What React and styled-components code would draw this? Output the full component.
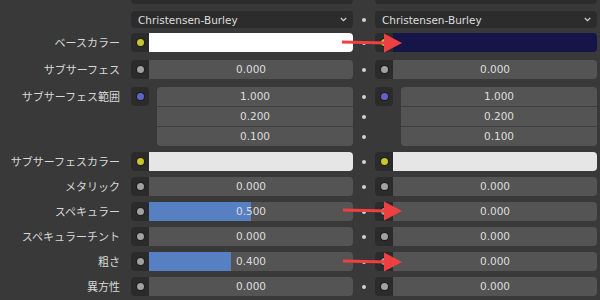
import styled, { createGlobalStyle } from 'styled-components';

const GlobalStyle = createGlobalStyle`
  html, body {
    margin: 0;
    background: #393939;
    overflow: hidden;
  }
`;

const Panel = styled.div`
  position: relative;
  width: 600px;
  height: 300px;
  overflow: hidden;
  display: flex;
  flex-direction: column;
  font-family: 'DejaVu Sans', sans-serif;
`;

const Row = styled.div`
  display: grid;
  grid-template-columns: 131px 222px 22px 222px;
  align-items: start;
  flex: none;
  margin-top: ${(p) => p.$mt}px;
`;

const Label = styled.div`
  height: 19px;
  line-height: 19px;
  padding-right: 11px;
  text-align: right;
  font-family: 'Noto Sans CJK JP', sans-serif;
  font-size: 11px;
  color: #d8d8d8;
  white-space: nowrap;
`;

const Input = styled.div`
  display: flex;
  align-items: flex-start;
  gap: ${(p) => (p.$vector ? 8 : 0)}px;
`;

const SocketBox = styled.div`
  width: 18px;
  height: 19px;
  flex: none;
  background: #2b2b2b;
  border-radius: ${(p) => (p.$vector ? '4px' : '4px 0 0 4px')};
  display: flex;
  align-items: center;
  justify-content: center;
`;

const SocketDot = styled.span`
  width: 7px;
  height: 7px;
  border-radius: 50%;
  background: ${(p) => p.$color};
  box-shadow: 0 0 0 1px rgba(0, 0, 0, 0.35);
`;

const NumField = styled.div`
  flex: 1;
  height: 19px;
  line-height: 19px;
  text-align: center;
  font-size: 10.5px;
  color: #dedede;
  border-radius: ${(p) => (p.$flat ? '0' : '0 4px 4px 0')};
  background: ${(p) =>
    p.$fill
      ? `linear-gradient(to right, #5680c2 ${p.$fill * 100}%, #545454 ${p.$fill * 100}%)`
      : '#545454'};
`;

const ColorField = styled.div`
  flex: 1;
  height: 19px;
  border-radius: 0 4px 4px 0;
  background: ${(p) => p.$color};
`;

const VectorStack = styled.div`
  flex: 1;
  display: flex;
  flex-direction: column;
  gap: 1px;
  background: #3e3e3e;
  border-radius: 4px;
  overflow: hidden;
`;

const Dropdown = styled.div`
  height: 17px;
  padding: 0 6px 0 7px;
  display: flex;
  align-items: center;
  justify-content: space-between;
  background: #2c2c2c;
  border-radius: 4px;
  font-size: 10.5px;
  color: #dedede;
`;

const DarkField = styled.div`
  height: 19px;
  background: #2c2c2c;
  border-radius: 4px;
`;

const Center = styled.div`
  display: flex;
  flex-direction: column;
  align-items: center;
  gap: 1px;
`;

const DotCell = styled.div`
  height: ${(p) => p.$h || 19}px;
  display: flex;
  align-items: center;
`;

const CenterDot = styled.span`
  width: 4px;
  height: 4px;
  border-radius: 50%;
  background: #d2d2d2;
`;

const Overlay = styled.svg`
  position: absolute;
  left: 0;
  top: 0;
  pointer-events: none;
`;

const SOCKET = { yellow: '#c7c729', gray: '#a1a1a1', blue: '#6363c7' };

function Chevron() {
  return (
    <svg width="7" height="5" viewBox="0 0 7 5">
      <polyline points="0.8,1 3.5,3.7 6.2,1" fill="none" stroke="#cfcfcf" strokeWidth="1.3" />
    </svg>
  );
}

function Dots({ n = 1, h }) {
  return (
    <Center>
      {Array.from({ length: n }).map((_, i) => (
        <DotCell key={i} $h={h}>
          <CenterDot />
        </DotCell>
      ))}
    </Center>
  );
}

function Value({ socket = 'gray', value, fill }) {
  return (
    <Input>
      <SocketBox>
        <SocketDot $color={SOCKET[socket]} />
      </SocketBox>
      <NumField $fill={fill}>{value}</NumField>
    </Input>
  );
}

function Color({ color }) {
  return (
    <Input>
      <SocketBox>
        <SocketDot $color={SOCKET.yellow} />
      </SocketBox>
      <ColorField $color={color} />
    </Input>
  );
}

function Vector({ values }) {
  return (
    <Input $vector>
      <SocketBox $vector>
        <SocketDot $color={SOCKET.blue} />
      </SocketBox>
      <VectorStack>
        {values.map((v) => (
          <NumField key={v} $flat>
            {v}
          </NumField>
        ))}
      </VectorStack>
    </Input>
  );
}

// red annotation arrow drawn over the panel
function Arrow({ x1, y1, y2 }) {
  return (
    <g fill="#ee4040" stroke="#ee4040">
      <line x1={x1} y1={y1} x2={388} y2={y2} strokeWidth="3" />
      <polygon points={`384,${y2 - 9.5} 402,${y2} 384,${y2 + 9.5}`} stroke="none" />
    </g>
  );
}

const scalars = [
  { label: 'メタリック', left: '0.000', right: '0.000' },
  { label: 'スペキュラー', left: '0.500', fill: 0.5, right: '0.000' },
  { label: 'スペキュラーチント', left: '0.000', right: '0.000' },
  { label: '粗さ', left: '0.400', fill: 0.4, right: '0.000' },
  { label: '異方性', left: '0.000', right: '0.000' },
];

export default function App() {
  return (
    <Panel>
      <GlobalStyle />
      <Row $mt={-15}>
        <span />
        <DarkField />
        <span />
        <DarkField />
      </Row>
      <Row $mt={7}>
        <span />
        <Dropdown>
          Christensen-Burley
          <Chevron />
        </Dropdown>
        <Dots h={17} />
        <Dropdown>
          Christensen-Burley
          <Chevron />
        </Dropdown>
      </Row>
      <Row $mt={5}>
        <Label>ベースカラー</Label>
        <Color color="#ffffff" />
        <Dots />
        <Color color="#15154a" />
      </Row>
      <Row $mt={8}>
        <Label>サブサーフェス</Label>
        <Value value="0.000" />
        <Dots />
        <Value value="0.000" />
      </Row>
      <Row $mt={8}>
        <Label>サブサーフェス範囲</Label>
        <Vector values={['1.000', '0.200', '0.100']} />
        <Dots n={3} />
        <Vector values={['1.000', '0.200', '0.100']} />
      </Row>
      <Row $mt={6}>
        <Label>サブサーフェスカラー</Label>
        <Color color="#e6e6e6" />
        <Dots />
        <Color color="#e6e6e6" />
      </Row>
      {scalars.map((s) => (
        <Row key={s.label} $mt={6}>
          <Label>{s.label}</Label>
          <Value value={s.left} fill={s.fill} />
          <Dots />
          <Value value={s.right} />
        </Row>
      ))}
      <Overlay width="600" height="300" viewBox="0 0 600 300">
        <Arrow x1={342} y1={42} y2={43} />
        <Arrow x1={343} y1={210} y2={211} />
        <Arrow x1={343} y1={261} y2={262} />
      </Overlay>
    </Panel>
  );
}
